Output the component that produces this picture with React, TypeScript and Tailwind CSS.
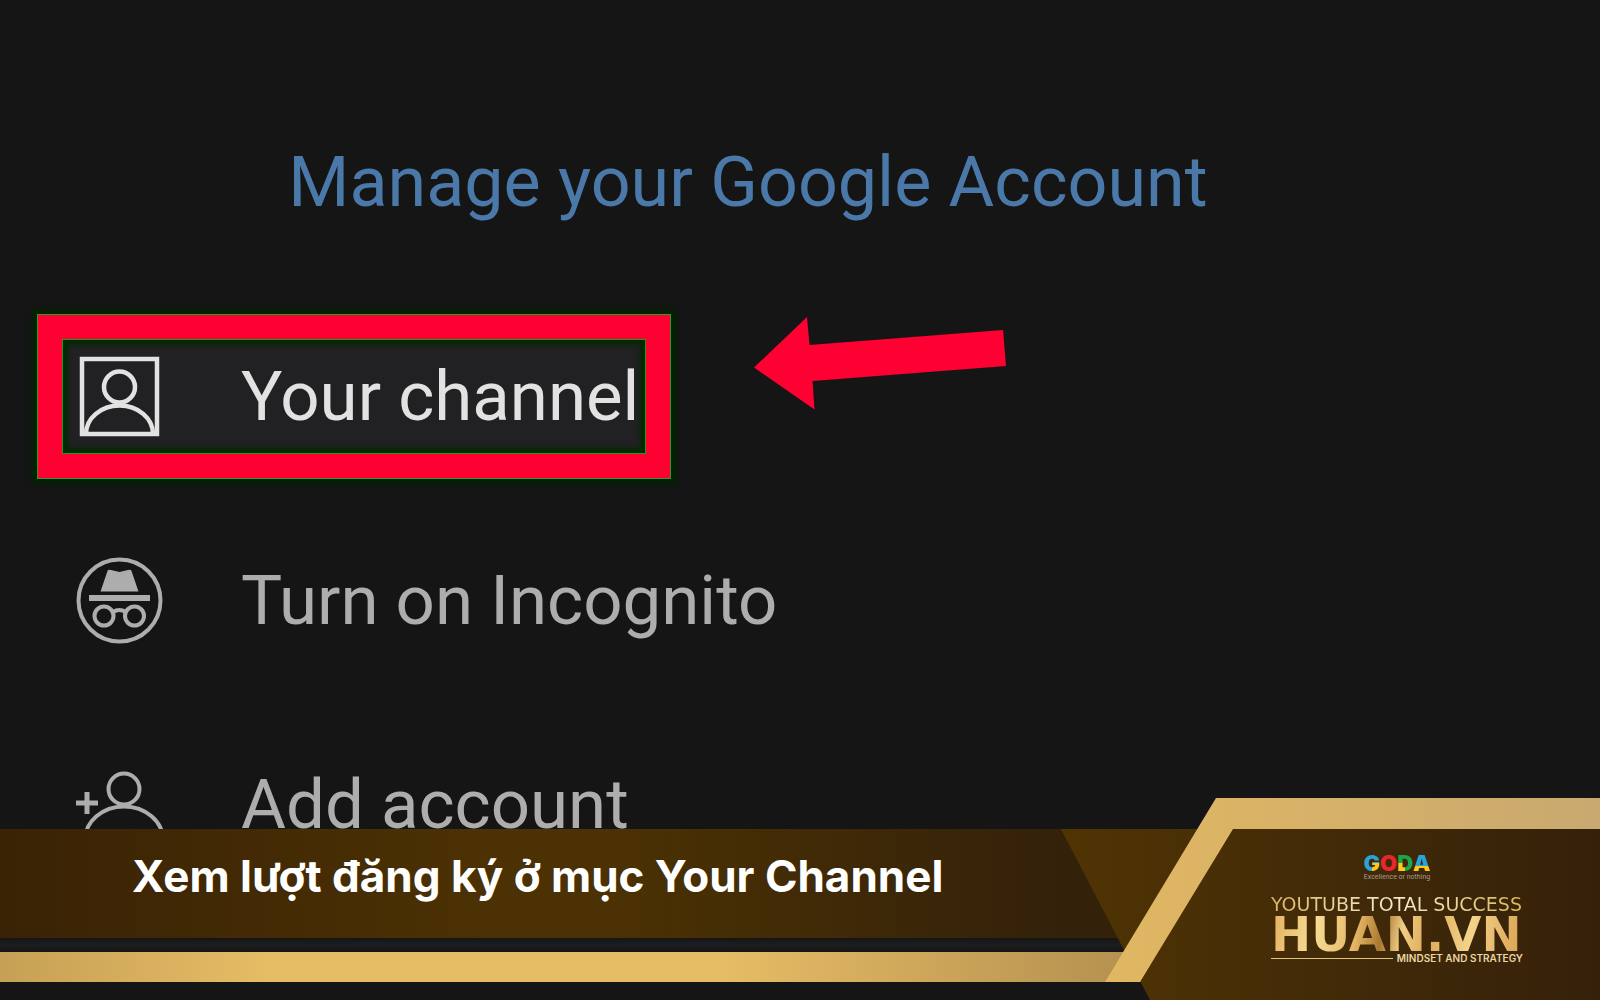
import type { ReactNode } from "react"
import clsx from "clsx"

function ChannelIcon() {
  return (
    <svg viewBox="0 0 88 88" className="size-22 shrink-0" fill="none" stroke="currentColor" strokeWidth="4.5" aria-hidden="true">
      <rect x="7" y="7" width="75" height="75" />
      <circle cx="44.5" cy="35" r="15.5" />
      <path d="M11 82 A33.5 28.5 0 0 1 78 82" />
    </svg>
  )
}

function IncognitoIcon() {
  return (
    <svg viewBox="0 0 88 88" className="size-22 shrink-0" fill="none" stroke="currentColor" strokeWidth="4" aria-hidden="true">
      <circle cx="44.5" cy="44.5" r="41" />
      <path d="M25.5 35.5 L32.500 15 Q33 13 36 14 L44.500 16 L53 14 Q56 13 56.500 15 L63.500 35.500 Z" fill="currentColor" stroke="none" />
      <path d="M14 42 H75" strokeWidth="6" />
      <circle cx="29" cy="60" r="9.500" />
      <circle cx="59.500" cy="60" r="9.500" />
      <path d="M38 56 Q44 52 51 56" />
    </svg>
  )
}

function AddAccountIcon() {
  return (
    <svg viewBox="0 0 88 88" className="size-22 shrink-0" fill="none" stroke="currentColor" strokeWidth="4" aria-hidden="true">
      <path d="M1 43 H23 M12 32 V54" strokeWidth="5" />
      <circle cx="49" cy="29" r="15.500" />
      <path d="M10 80 A39 33.500 0 0 1 88 80" />
    </svg>
  )
}

function Arrow() {
  return (
    <svg viewBox="0 0 252 158" className="ml-21 h-[158px] w-[252px] shrink-0" aria-hidden="true">
      <path d="M0 50.500 L53 0 L55.500 28 L249 13 L252 49 L58.500 64 L60.500 92.500 Z" fill="#ff0033" />
    </svg>
  )
}

type MenuItemProps = {
  icon: ReactNode
  label: string
  highlighted?: boolean
}

function MenuItem({ icon, label, highlighted }: MenuItemProps) {
  return (
    <li className="flex h-51 items-center pl-[38px]">
      <button
        type="button"
        className={clsx(
          "flex h-[163px] items-center gap-[78px] border-24 pr-[7px] pl-[13px] text-left text-[69px] leading-none whitespace-nowrap",
          highlighted
            ? "border-[#ff0033] bg-[#212123] text-[#e2e2e2] shadow-[0_0_0_1px_#2f9a2f,0_0_4px_6px_#032203,inset_0_0_0_1px_#1f9a1f,inset_0_0_4px_6px_#032a03]"
            : "border-transparent text-[#adadad]",
        )}
      >
        {icon}
        <span>{label}</span>
      </button>
      {highlighted && <Arrow />}
    </li>
  )
}

function GodaLogo() {
  return (
    <div className="flex flex-col items-center">
      <div className="flex font-['Inter',sans-serif] text-[22px] leading-[18px] font-black">
        <span className="bg-[conic-gradient(#29a3dc_25%,#fbc916_25%_50%,#29a3dc_50%)] bg-clip-text text-transparent">G</span>
        <span className="text-[#e8262d]">O</span>
        <span className="bg-[conic-gradient(#1fa64a_50%,#fbc916_50%_75%,#1fa64a_75%)] bg-clip-text text-transparent">D</span>
        <span className="bg-[linear-gradient(#29a3dc_65%,#fbc916_65%)] bg-clip-text text-transparent">A</span>
      </div>
      <p className="font-['Roboto',sans-serif] text-[7px] leading-[10px] text-[#a99c86]">Excellence or nothing</p>
    </div>
  )
}

function Brand() {
  return (
    <div className="flex w-[252px] flex-col font-['DejaVu_Sans',sans-serif] whitespace-nowrap">
      <GodaLogo />
      <p className="mt-3 bg-linear-to-r from-[#d9b865] via-[#f5ead0] to-[#d9b850] bg-clip-text text-[19px] leading-5 text-transparent">YOUTUBE TOTAL SUCCESS</p>
      <p className="bg-[linear-gradient(100deg,#e2b15c,#f6dc95_18%,#e5b765_34%,#a87831_44%,#f0cf88_52%,#dda957_62%,#f3d38b_78%,#d9a04f)] bg-clip-text text-5xl leading-10 font-bold text-transparent">HUAN.VN</p>
      <div className="flex items-center gap-1">
        <span className="h-px flex-1 bg-[#e0c486]" />
        <span className="font-['Inter',sans-serif] text-[10px] leading-2 font-semibold text-[#ead7a2]">MINDSET AND STRATEGY</span>
      </div>
    </div>
  )
}

function Banner() {
  return (
    <footer className="z-10 col-start-1 row-start-1 grid h-[202px] self-end">
      <div className="col-start-1 row-start-1 flex flex-col justify-end pb-[18px]">
        <div className="flex h-[109px] items-center bg-[linear-gradient(90deg,#3a2206,#4b3103_480px,#4b3103_620px,#33210a_1061px)] pb-4 pl-33">
          <h1 className="font-['Inter',sans-serif] text-[44px] leading-none font-bold whitespace-nowrap text-white">Xem lượt đăng ký ở mục Your Channel</h1>
        </div>
        <div className="h-[14px] bg-linear-to-b from-[#151515] via-[#1d1e20] to-[#151515]" />
        <div className="h-[30px] bg-[linear-gradient(90deg,#c6a055,#e6bc65_270px,#e6bc65_720px,#b59150_1125px)]" />
      </div>
      <div className="col-start-1 row-start-1 grid w-[539px] justify-self-end">
        <div className="col-start-1 row-start-1 bg-linear-to-r from-[#503403] to-[#35210a] [clip-path:polygon(0_31px,100%_31px,100%_100%,89px_100%)]" />
        <div className="col-start-1 row-start-1 bg-linear-to-r from-[#e3b860] to-[#c9a970] [clip-path:polygon(155px_0,100%_0,100%_31px,172px_31px,79px_184px,44px_184px)]" />
        <div className="z-10 col-start-1 row-start-1 flex justify-end pt-14 pr-[77px]">
          <Brand />
        </div>
      </div>
    </footer>
  )
}

export default function App() {
  return (
    <div className="grid min-h-screen overflow-hidden bg-[#151515] font-['Roboto',sans-serif]">
      <main className="col-start-1 row-start-1 pt-[148px]">
        <a href="#account" className="block pr-26 text-center text-[70px] leading-[68px] text-[#4a78a8]">
          Manage your Google Account
        </a>
        <ul className="pt-[78px]">
          <MenuItem icon={<ChannelIcon />} label="Your channel" highlighted />
          <MenuItem icon={<IncognitoIcon />} label="Turn on Incognito" />
          <MenuItem icon={<AddAccountIcon />} label="Add account" />
        </ul>
      </main>
      <Banner />
    </div>
  )
}
